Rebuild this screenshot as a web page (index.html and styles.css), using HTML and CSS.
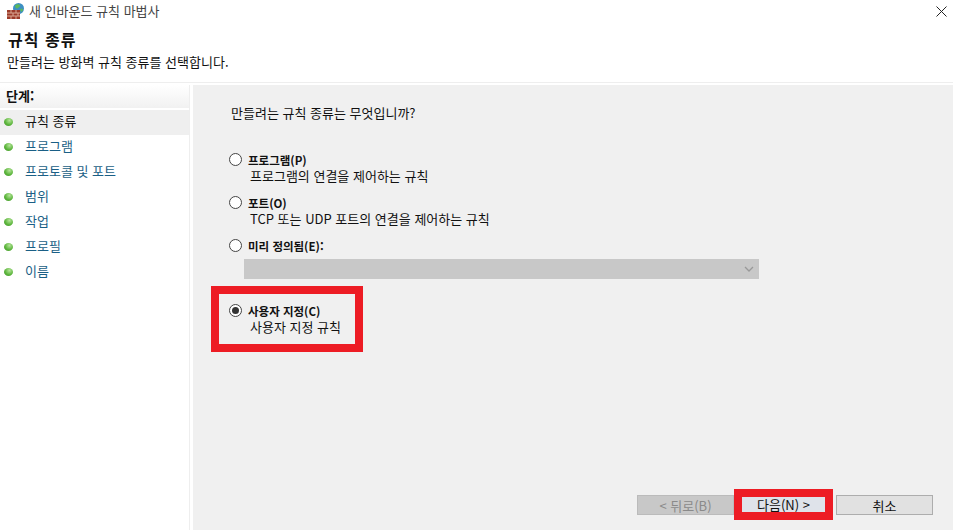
FILE: index.html
```html
<!DOCTYPE html>
<html lang="ko">
<head>
    <meta charset="UTF-8">
    <title>새 인바운드 규칙 마법사</title>
    <link rel="stylesheet" href="styles.css">
</head>
<body>
    <div class="titlebar">
        <svg class="app-icon" width="18" height="18" viewBox="0 0 18 18">
            <circle cx="11.5" cy="6.5" r="5.5" fill="#3d8fc4"/>
            <path d="M8 3.500c2-2 4-1.500 5-.5s-1 2-2 3-3 0-3-2.500z" fill="#5cb85c"/>
            <path d="M13 7l2.500-.5.500 2-2 1.500z" fill="#5cb85c"/>
            <rect x="0" y="8" width="13" height="9" fill="#9c3b2a"/>
            <path d="M0 11h13M0 14h13M4 8v3M9 8v3M6 11v3M11 11v3M4 14v3M9 14v3" stroke="#d9a893" stroke-width="1" fill="none"/>
        </svg>
        <span class="title-text">새 인바운드 규칙 마법사</span>
        <svg class="close-icon" width="11" height="11" viewBox="0 0 11 11">
            <path d="M.5.500l10 10M10.500.500l-10 10" stroke="#222" stroke-width="1" fill="none"/>
        </svg>
    </div>

    <header class="wizard-head">
        <h1>규칙 종류</h1>
        <p>만들려는 방화벽 규칙 종류를 선택합니다.</p>
    </header>

    <div class="wizard-body">
        <aside class="steps">
            <div class="steps-title">단계:</div>
            <ul>
                <li class="current"><span class="dot"></span>규칙 종류</li>
                <li><span class="dot"></span>프로그램</li>
                <li><span class="dot"></span>프로토콜 및 포트</li>
                <li><span class="dot"></span>범위</li>
                <li><span class="dot"></span>작업</li>
                <li><span class="dot"></span>프로필</li>
                <li><span class="dot"></span>이름</li>
            </ul>
        </aside>

        <main class="panel">
            <p class="question">만들려는 규칙 종류는 무엇입니까?</p>

            <div class="option">
                <div class="option-label"><span class="radio"></span><b>프로그램(P)</b></div>
                <div class="option-desc">프로그램의 연결을 제어하는 규칙</div>
            </div>
            <div class="option">
                <div class="option-label"><span class="radio"></span><b>포트(O)</b></div>
                <div class="option-desc">TCP 또는 UDP 포트의 연결을 제어하는 규칙</div>
            </div>
            <div class="option option-select">
                <div class="option-label"><span class="radio"></span><b>미리 정의됨(E):</b></div>
                <div class="select-box">
                    <svg width="10" height="6" viewBox="0 0 10 6"><path d="M1 1l4 4 4-4" stroke="#999" stroke-width="1.300" fill="none"/></svg>
                </div>
            </div>
            <div class="option option-custom">
                <div class="option-label"><span class="radio checked"></span><b>사용자 지정(C)</b></div>
                <div class="option-desc">사용자 지정 규칙</div>
                <div class="mark mark-custom"></div>
            </div>

            <div class="buttons">
                <button class="btn" disabled>&lt; 뒤로(B)</button>
                <button class="btn btn-next">다음(N) &gt;<span class="mark mark-next"></span></button>
                <button class="btn btn-cancel">취소</button>
            </div>
        </main>
    </div>
</body>
</html>
```

FILE: styles.css
```css
html, body {
    margin: 0;
    padding: 0;
}
body {
    width: 953px;
    height: 530px;
    overflow: hidden;
    background: white;
    color: #111;
    font-family: "Noto Sans CJK KR", "Liberation Sans", sans-serif;
    font-size: 13px;
    display: flex;
    flex-direction: column;
}
.titlebar {
    height: 22px;
    box-sizing: border-box;
    display: flex;
    align-items: center;
    padding: 0 6px 0 7px;
    flex-shrink: 0;
}
.app-icon {
    margin-right: 4px;
}
.title-text {
    color: #444;
    margin-bottom: 2px;
}
.close-icon {
    margin-left: auto;
}
.wizard-head {
    height: 61px;
    box-sizing: border-box;
    padding-top: 7px;
    border-bottom: 1px solid #eee;
    flex-shrink: 0;
}
.wizard-head h1 {
    margin: 0 0 0 8px;
    font-size: 16px;
    letter-spacing: 1px;
    line-height: 20px;
    font-weight: 700;
}
.wizard-head p {
    margin: 4px 0 0 7px;
    line-height: 17px;
}
.wizard-body {
    flex: 1;
    display: flex;
    padding-top: 2px;
}
.steps {
    width: 190px;
    flex-shrink: 0;
    margin-right: 3px;
    border-right: 1px solid #eee;
    box-sizing: border-box;
}
.steps-title {
    height: 23px;
    line-height: 22px;
    padding-left: 6px;
    font-weight: 700;
    background: linear-gradient(#fff, #f1f1f1);
}
.steps ul {
    list-style: none;
    margin: 2px 0 0;
    padding: 0;
}
.steps li {
    height: 25px;
    box-sizing: border-box;
    padding-bottom: 4px;
    display: flex;
    align-items: center;
    color: #1a5f86;
}
.steps li.current {
    color: #111;
    background: #efefef;
}
.dot {
    width: 9px;
    height: 8px;
    margin: 2px 12px 0 4px;
    border-radius: 50%;
    background: radial-gradient(circle at 60% 30%, #b5e59a, #5cb53c 55%, #3f8f2c);
}
.panel {
    flex: 1;
    background: #f0f0f0;
    position: relative;
    padding: 19px 0 0 36px;
    display: flex;
    flex-direction: column;
}
.question {
    margin: 0 0 30px 2px;
    line-height: 17px;
}
.option {
    margin-bottom: 10px;
}
.option-label {
    display: flex;
    align-items: center;
    height: 17px;
    font-size: 11.500px;
}
.option-label b {
    font-weight: 700;
}
.radio {
    width: 11px;
    height: 11px;
    margin-right: 6px;
    border: 1px solid #444;
    border-radius: 50%;
    background: white;
    display: flex;
    align-items: center;
    justify-content: center;
}
.radio.checked::after {
    content: '';
    width: 7px;
    height: 7px;
    border-radius: 50%;
    background: #333;
}
.option-desc {
    margin: -1px 0 0 21px;
    line-height: 17px;
}
.option-select {
    margin-bottom: 0;
}
.select-box {
    width: 515px;
    height: 20px;
    margin: 5px 0 0 15px;
    background: #c8c8c8;
    display: flex;
    align-items: center;
    justify-content: flex-end;
    padding-right: 5px;
    box-sizing: border-box;
}
.option-custom {
    position: relative;
    margin-top: 23px;
}
/* red annotation frames drawn over the dialog */
.mark {
    position: absolute;
    box-sizing: border-box;
    border: 8px solid #ed1c24;
}
.mark-custom {
    left: -18px;
    top: -16px;
    width: 152px;
    height: 66px;
}
.buttons {
    position: absolute;
    right: 20px;
    bottom: 15px;
    display: flex;
}
.btn {
    width: 97px;
    height: 20px;
    padding: 0 0 2px;
    border: 1px solid #adadad;
    background: #e1e1e1;
    color: #111;
    font: 13px "Noto Sans CJK KR", "Liberation Sans", sans-serif;
    position: relative;
}
.btn[disabled] {
    background: #c8c8c8;
    color: #8a8a8a;
    border-color: #bbb;
}
.btn-next {
    background: #dfe3ea;
    width: 99px;
    margin-right: 3px;
    border: none;
}
.mark-next {
    left: 0;
    top: -6px;
    width: 99px;
    height: 31px;
}
```
